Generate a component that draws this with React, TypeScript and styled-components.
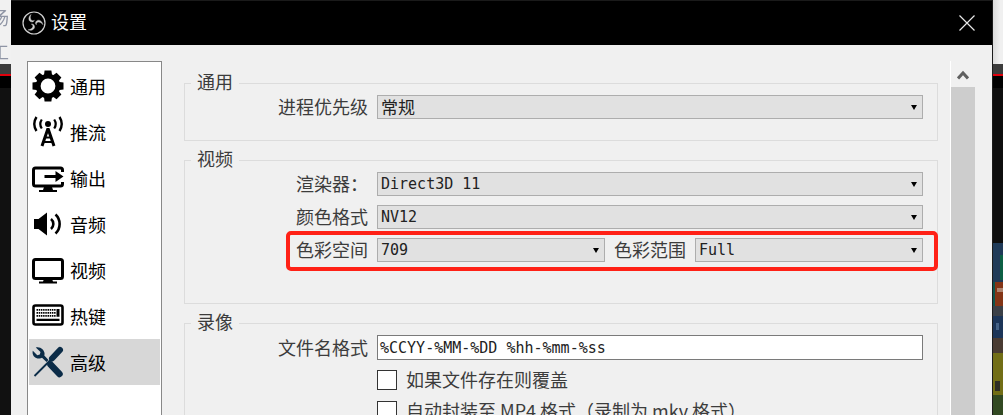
import React from "react";
import styled, { createGlobalStyle } from "styled-components";

const Global = createGlobalStyle`
  html, body { margin: 0; padding: 0; background: #111; }
  body { font-family: "Noto Sans CJK SC", "Noto Sans", sans-serif; }
`;

const Page = styled.div`
  position: relative;
  width: 1003px;
  height: 415px;
  display: flex;
  overflow: hidden;
  background: #111;
`;

const Strip = styled.div<{ $width: number; $side: "left" | "right" }>`
  width: ${(p) => p.$width}px;
  flex: none;
  display: flex;
  flex-direction: column;
  overflow: hidden;
  border-left: ${(p) => (p.$side === "right" ? "1px solid #1c1c1c" : "none")};
`;

const StripTop = styled.div<{ $side: "left" | "right" }>`
  height: 64px;
  flex: none;
  overflow: hidden;
  background: ${(p) =>
    p.$side === "left" ? "#f1f1f1" : "linear-gradient(90deg, #dcdcdc, #f0f0f0 60%)"};
`;

const StripGlyph = styled.div<{ $top: number }>`
  margin: ${(p) => p.$top}px 0 0 -9px;
  width: 18px;
  height: 18px;
  font-size: 18px;
  line-height: 18px;
  color: #8f95a5;
  filter: blur(0.4px);
`;

const StripBand = styled.div<{ $h: number; $c: string }>`
  height: ${(p) => p.$h}px;
  flex: none;
  background: ${(p) => p.$c};
`;

const StripPicture = styled.svg`
  display: block;
  flex: none;
`;

const Dialog = styled.div`
  width: 981px;
  flex: none;
  display: flex;
  flex-direction: column;
  background: #f0f0f0;
  overflow: hidden;
`;

const TitleBar = styled.div`
  height: 44px;
  flex: none;
  box-sizing: content-box;
  border-top: 1px solid #1a1a1a;
  background: #000;
  display: flex;
  align-items: center;
  padding: 0 17px 0 11px;
  gap: 5px;
  color: #fff;
`;

const TitleText = styled.span`
  font-size: 18px;
  line-height: 40px;
  padding-bottom: 4px;
  flex: 1;
`;

const Body = styled.div`
  flex: 1;
  min-height: 0;
  display: flex;
  padding: 16px 17px 0 16px;
`;

const Sidebar = styled.div`
  width: 135px;
  flex: none;
  box-sizing: border-box;
  border: 1px solid #888;
  border-bottom: none;
  background: #fff;
  padding: 1px;
`;

const NavRow = styled.div<{ $active?: boolean }>`
  height: 46px;
  display: flex;
  align-items: center;
  gap: 6px;
  padding-left: 3px;
  font-size: 18px;
  color: #000;
  background: ${(p) => (p.$active ? "#d7d7d7" : "transparent")};
`;

const NavIcon = styled.svg`
  width: 32px;
  height: 32px;
  flex: none;
  display: block;
`;

const Content = styled.div`
  flex: 1;
  min-width: 0;
  padding: 22px 12px 0 22px;
  display: flex;
  flex-direction: column;
  gap: 19px;
`;

const Group = styled.section<{ $bottom: number }>`
  border: 1px solid #dcdcdc;
  padding: 0 14px ${(p) => p.$bottom}px 0;
  display: flex;
  flex-direction: column;
  flex: none;
`;

const GroupTitle = styled.div`
  width: fit-content;
  margin: -12px 0 0 6px;
  padding: 0 6px;
  height: 23px;
  line-height: 19px;
  font-size: 18px;
  color: #3c3c3c;
  background: #f0f0f0;
`;

const GroupRows = styled.div<{ $gap: number }>`
  display: flex;
  flex-direction: column;
  gap: ${(p) => p.$gap}px;
`;

const Row = styled.div`
  display: grid;
  grid-template-columns: 183px 1fr;
  column-gap: 9px;
  align-items: center;
`;

const Label = styled.label`
  font-size: 18px;
  line-height: 22px;
  height: 24px;
  color: #3c3c3c;
  text-align: right;
  white-space: nowrap;
`;

const Split = styled.div`
  display: flex;
  align-items: center;
  gap: 9px;
`;

const Combo = styled.div`
  flex: 1;
  min-width: 0;
  height: 24px;
  box-sizing: border-box;
  border: 1px solid #adadad;
  background: #e1e1e1;
  display: flex;
  align-items: center;
  padding: 0 5px 0 3px;
  color: #222;
`;

const ComboText = styled.span<{ $cjk?: boolean }>`
  flex: 1;
  font-family: ${(p) =>
    p.$cjk ? `"Noto Sans CJK SC", sans-serif` : `"DejaVu Sans Mono", monospace`};
  font-size: ${(p) => (p.$cjk ? 17 : 15)}px;
  line-height: 22px;
  white-space: nowrap;
`;

const Caret = styled.span`
  width: 0;
  height: 0;
  margin-top: 1px;
  border-left: 3.5px solid transparent;
  border-right: 3.5px solid transparent;
  border-top: 5px solid #000;
`;

const TextInput = styled.div`
  height: 25px;
  box-sizing: border-box;
  border: 1px solid #7a7a7a;
  background: #fff;
  padding-left: 2px;
  font-family: "DejaVu Sans Mono", monospace;
  font-size: 15px;
  line-height: 24px;
  color: #222;
  white-space: nowrap;
`;

const CheckRow = styled.div`
  height: 21px;
  display: flex;
  align-items: flex-start;
  gap: 9px;
`;

const CheckBox = styled.span`
  width: 20px;
  height: 20px;
  flex: none;
  box-sizing: border-box;
  border: 1px solid #333;
  background: #fff;
`;

const CheckLabel = styled.span`
  font-size: 18px;
  line-height: 19px;
  color: #3c3c3c;
  white-space: nowrap;
`;

const Scrollbar = styled.div`
  width: 25px;
  flex: none;
  box-sizing: border-box;
  border-left: 1px solid #fff;
  display: flex;
  flex-direction: column;
`;

const ScrollButton = styled.div`
  height: 26px;
  flex: none;
  display: flex;
  justify-content: center;
  padding-top: 9px;
  box-sizing: border-box;
`;

const ScrollTrack = styled.div`
  flex: 1;
  background: #cdcdcd;
`;

const Highlight = styled.div`
  position: absolute;
  left: 286px;
  top: 231px;
  width: 652px;
  height: 40px;
  box-sizing: border-box;
  border: 4px solid #ff2116;
  border-radius: 5px;
  pointer-events: none;
`;

const ObsLogo = () => (
  <svg width="24" height="24" viewBox="0 0 24 24" fill="none" stroke="#d2d2d2">
    <circle cx="12" cy="12" r="11" strokeWidth="1.2" />
    {[0, 120, 240].map((r) => (
      <path
        key={r}
        d="M9 3.5C6 6 6.3 10 9 10.8c1.6.5 3-.2 3.3-1.6-.8 .7-2 .8-2.8.1C8 8 8 5.5 9 3.5z"
        fill="#d2d2d2"
        strokeWidth="0.4"
        transform={`rotate(${r} 12 12)`}
      />
    ))}
  </svg>
);

const GearIcon = () => (
  <NavIcon viewBox="0 0 32 32">
    {[0, 45, 90, 135, 180, 225, 270, 315].map((r) => (
      <path key={r} d="M12.6 0.5h6.8l.8 6h-8.4z" fill="#000" transform={`rotate(${r} 16 16)`} />
    ))}
    <circle cx="16" cy="16" r="9.8" fill="none" stroke="#000" strokeWidth="4.8" />
  </NavIcon>
);

const AntennaIcon = () => (
  <NavIcon viewBox="0 0 32 32" fill="none" stroke="#000">
    <circle cx="16" cy="8" r="3" fill="#000" stroke="none" />
    <path d="M9.800 3.500a8 8 0 0 0 0 9M22.200 3.500a8 8 0 0 1 0 9" strokeWidth="2.200" />
    <path d="M4.500 1a13 13 0 0 0 0 14M27.500 1a13 13 0 0 1 0 14" strokeWidth="2.400" />
    <path d="M16 12.500 10 30M16 12.500 22 30" strokeWidth="3" />
    <path d="M12 21.500h8M10.500 26h11" strokeWidth="2" />
  </NavIcon>
);

const OutputIcon = () => (
  <NavIcon viewBox="0 0 32 32" fill="none" stroke="#000">
    <path d="M30.500 10V8a2 2 0 0 0-2-2H3.500a2 2 0 0 0-2 2v14a2 2 0 0 0 2 2h25a2 2 0 0 0 2-2v-2" strokeWidth="3" />
    <path d="M12.500 13h11V9l8 5.500-8 5.500v-4h-11z" fill="#000" stroke="none" />
    <path d="M12 25h8l1 3h4v2H7v-2h4z" fill="#000" stroke="none" />
  </NavIcon>
);

const SpeakerIcon = () => (
  <NavIcon viewBox="0 0 32 32" fill="none" stroke="#000">
    <path d="M2 11h4.500L15 4.500v23L6.500 21H2z" fill="#000" stroke="none" />
    <path d="M19 11a6.500 6.500 0 0 1 0 10" strokeWidth="2.600" />
    <path d="M23.500 6.500a13 13 0 0 1 0 19" strokeWidth="2.600" />
  </NavIcon>
);

const MonitorIcon = () => (
  <NavIcon viewBox="0 0 32 32" fill="none" stroke="#000">
    <rect x="1.500" y="5.500" width="29" height="19" rx="2" strokeWidth="3" />
    <path d="M12 25h8l1 2.500h4V29.500H7V27.500h4z" fill="#000" stroke="none" />
  </NavIcon>
);

const KeyboardIcon = () => {
  const keys: string[] = [];
  for (let row = 0; row < 3; row++) {
    for (let col = 0; col < 9; col++) {
      keys.push(`M${4.5 + col * 2.2} ${9 + row * 3}h1.500v1.800h-1.500z`);
    }
  }
  return (
    <NavIcon viewBox="0 0 32 32" fill="none" stroke="#000">
      <rect x="1.500" y="5.500" width="29" height="19" rx="2" strokeWidth="2.600" />
      <path d={keys.join("")} fill="#000" stroke="none" />
      <path d="M24.500 9h3v7.800h-3zM4.500 18.800h23v2.200h-23z" fill="#000" stroke="none" />
    </NavIcon>
  );
};

const ToolsIcon = () => (
  <NavIcon viewBox="0 0 32 32" fill="none" stroke="#0b2c48">
    <path
      d="M3.800 1.500 8.500 6l-.7 2.500-2.500.7L.8 4.800C-.3 9 3 13 7.500 12.500c1 0 1.800-.3 2.500-.7L14.500 16l2-2-4.200-4.500c1.500-4.500-3.500-9.500-8.500-8z"
      fill="#0b2c48"
      stroke="none"
    />
    <path d="M18.500 18.500 27.500 28" strokeWidth="6.500" strokeLinecap="round" />
    <path d="M28 4 20 12.500" strokeWidth="6" strokeLinecap="round" />
    <path d="M20 12.500 2.500 30" strokeWidth="1.800" />
  </NavIcon>
);

const navItems = [
  { label: "通用", icon: <GearIcon /> },
  { label: "推流", icon: <AntennaIcon /> },
  { label: "输出", icon: <OutputIcon /> },
  { label: "音频", icon: <SpeakerIcon /> },
  { label: "视频", icon: <MonitorIcon /> },
  { label: "热键", icon: <KeyboardIcon /> },
  { label: "高级", icon: <ToolsIcon />, active: true },
];

const Select = ({ value, cjk }: { value: string; cjk?: boolean }) => (
  <Combo>
    <ComboText $cjk={cjk}>{value}</ComboText>
    <Caret />
  </Combo>
);

export default function App() {
  return (
    <Page>
      <Global />
      <Strip $width={11} $side="left">
        <StripTop $side="left">
          <StripGlyph $top={8}>扬</StripGlyph>
          <StripGlyph $top={16}>工</StripGlyph>
        </StripTop>
        <StripBand $h={10} $c="#3c3c3c" />
        <StripBand $h={2} $c="#e0000c" />
        <StripBand $h={12} $c="#000" />
        <StripBand $h={327} $c="#111" />
      </Strip>
      <Dialog>
        <TitleBar>
          <ObsLogo />
          <TitleText>设置</TitleText>
          <svg width="16" height="16" viewBox="0 0 16 16" stroke="#e8e8e8" strokeWidth="1.200">
            <path d="M.5.500l15 15M15.500.500l-15 15" />
          </svg>
        </TitleBar>
        <Body>
          <Sidebar>
            {navItems.map((item) => (
              <NavRow key={item.label} $active={item.active}>
                {item.icon}
                {item.label}
              </NavRow>
            ))}
          </Sidebar>
          <Content>
            <Group $bottom={21}>
              <GroupTitle>通用</GroupTitle>
              <GroupRows $gap={9}>
                <Row>
                  <Label>进程优先级</Label>
                  <Select value="常规" cjk />
                </Row>
              </GroupRows>
            </Group>
            <Group $bottom={41}>
              <GroupTitle>视频</GroupTitle>
              <GroupRows $gap={9}>
                <Row>
                  <Label>渲染器：</Label>
                  <Select value="Direct3D 11" />
                </Row>
                <Row>
                  <Label>颜色格式</Label>
                  <Select value="NV12" />
                </Row>
                <Row>
                  <Label>色彩空间</Label>
                  <Split>
                    <Select value="709" />
                    <Label>色彩范围</Label>
                    <Select value="Full" />
                  </Split>
                </Row>
              </GroupRows>
            </Group>
            <Group $bottom={20}>
              <GroupTitle>录像</GroupTitle>
              <GroupRows $gap={10}>
                <Row>
                  <Label>文件名格式</Label>
                  <TextInput>%CCYY-%MM-%DD %hh-%mm-%ss</TextInput>
                </Row>
                <Row>
                  <span />
                  <CheckRow>
                    <CheckBox />
                    <CheckLabel>如果文件存在则覆盖</CheckLabel>
                  </CheckRow>
                </Row>
                <Row>
                  <span />
                  <CheckRow>
                    <CheckBox />
                    <CheckLabel>自动封装至 MP4 格式（录制为 mkv 格式）</CheckLabel>
                  </CheckRow>
                </Row>
              </GroupRows>
            </Group>
          </Content>
          <Scrollbar>
            <ScrollButton>
              <svg width="12" height="10" viewBox="0 0 12 10" fill="none" stroke="#606060" strokeWidth="3">
                <path d="M1 8.500l5-5.500 5 5.500" />
              </svg>
            </ScrollButton>
            <ScrollTrack />
          </Scrollbar>
        </Body>
      </Dialog>
      <Strip $width={11} $side="right">
        <StripTop $side="right" />
        <StripBand $h={10} $c="#3c3c3c" />
        <StripBand $h={2} $c="#e0000c" />
        <StripBand $h={12} $c="#000" />
        <StripBand $h={155} $c="#0e0e0e" />
        <StripPicture width="10" height="172" viewBox="0 0 10 172">
          <defs>
            <filter id="soft">
              <feGaussianBlur stdDeviation="0.6" />
            </filter>
          </defs>
          <rect width="10" height="172" fill="#1f3a58" />
          <g filter="url(#soft)">
            <rect x="7" y="12" width="3" height="25" fill="#0c6044" />
            <rect x="0" y="39" width="2" height="24" fill="#10544e" />
            <rect x="2" y="39" width="8" height="24" fill="#843517" />
            <rect x="4" y="45" width="6" height="4" fill="#ad836e" />
            <rect x="0" y="63" width="10" height="10" fill="#3b4046" />
            <rect x="0" y="73" width="10" height="22" fill="#1d3658" />
            <rect x="3" y="80" width="3" height="7" fill="#446286" />
            <rect x="0" y="95" width="10" height="15" fill="#483b32" />
            <rect x="0" y="110" width="10" height="42" fill="#726e16" />
            <rect x="2" y="138" width="5" height="10" fill="#2e2e26" />
            <rect x="0" y="152" width="10" height="20" fill="#324820" />
          </g>
        </StripPicture>
      </Strip>
      <Highlight />
    </Page>
  );
}
